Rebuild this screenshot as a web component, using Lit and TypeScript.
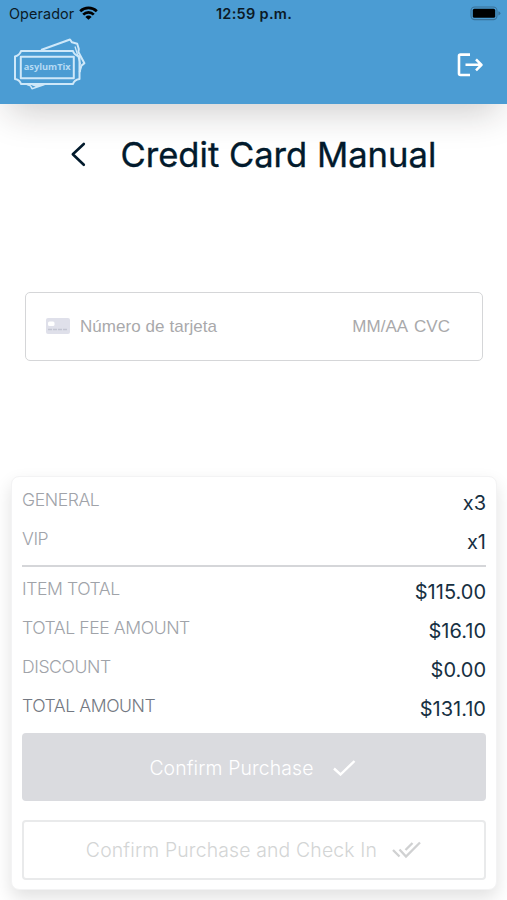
import { LitElement, html, css } from "lit";
import { customElement, property } from "lit/decorators.js";

@customElement("status-bar")
class StatusBar extends LitElement {
  static styles = css`
    :host {
      display: grid;
      grid-template-columns: 1fr auto 1fr;
      align-items: center;
      height: 28px;
      padding: 0 6px 0 9px;
      font: 400 14.4px/28px Inter, sans-serif;
      color: #0b1a26;
    }
    .carrier { display: flex; align-items: center; gap: 5px; letter-spacing: 0.1px; }
    .carrier svg { margin-bottom: 2px; }
    .time { font-weight: 600; font-size: 14.5px; letter-spacing: 0.3px; margin-right: 2px; }
    .battery { justify-self: end; margin-bottom: 2px; }
    svg { display: block; }
  `;
  render() {
    return html`
      <div class="carrier">
        <span>Operador</span>
        <svg width="19" height="14" viewBox="0 0 19 14" fill="none" stroke="#000" stroke-width="2.7">
          <path d="M1.2 5.2a11.9 11.9 0 0 1 16.6 0" />
          <path d="M4.2 8.6a7.6 7.6 0 0 1 10.6 0" />
          <path d="M9.5 13.8 6.4 10.9a4.5 4.5 0 0 1 6.2 0z" fill="#000" stroke="none" />
        </svg>
      </div>
      <div class="time">12:59 p.m.</div>
      <svg class="battery" width="31" height="15" viewBox="0 0 31 15">
        <rect x="1" y="1" width="26" height="12.6" rx="3.8" fill="none" stroke="#3a7198" stroke-width="1.1" />
        <rect x="2.8" y="2.8" width="22.4" height="9" rx="1.6" fill="#000" />
        <path d="M28.4 5.2q2 .5 2 2.1t-2 2.1z" fill="#3a7198" />
      </svg>
    `;
  }
}

@customElement("summary-row")
class SummaryRow extends LitElement {
  @property() label = "";
  @property() value = "";
  @property({ type: Boolean, reflect: true }) strong = false;
  static styles = css`
    :host {
      display: flex;
      justify-content: space-between;
      height: 39px;
      font-family: Inter, sans-serif;
    }
    .label { font-size: 17.6px; line-height: 34px; font-weight: 300; color: #a0a3a9; letter-spacing: -0.42px; }
    .value { font-size: 20px; line-height: 40px; color: #173042; }
    :host([strong]) .label { color: #737882; }
  `;
  render() {
    return html`<span class="label">${this.label}</span><span class="value">${this.value}</span>`;
  }
}

@customElement("app-root")
class AppRoot extends LitElement {
  static styles = css`
    :host {
      display: flex;
      flex-direction: column;
      height: 900px;
      overflow: hidden;
      background: #fff;
      font-family: Inter, sans-serif;
    }
    svg { display: block; flex: none; }
    header {
      height: 103.5px;
      box-sizing: border-box;
      background: #4b9cd3;
      box-shadow: 0 16px 36px -8px rgba(30, 22, 22, 0.22);
    }
    .nav {
      display: flex;
      justify-content: space-between;
      align-items: center;
      height: 73px;
      padding: 0 23px 0 12px;
    }
    .heading {
      display: flex;
      align-items: center;
      gap: 34.5px;
      height: 50px;
      margin-top: 25.5px;
      margin-bottom: 1px;
      padding-left: 68px;
    }
    h1 { margin: 0; font-size: 34.6px; line-height: 50px; font-weight: 400; letter-spacing: 0; color: #021a2c; -webkit-text-stroke: 0.35px #021a2c; }
    .card-field {
      display: flex;
      align-items: center;
      box-sizing: border-box;
      height: 69px;
      margin: 112px 24px 0 25px;
      padding: 0 32px 0 20px;
      border: 1.5px solid #d5d6d8;
      border-radius: 5px;
      font: 400 17px/24px "Liberation Sans", Arial, sans-serif;
      color: #a9a9ab;
    }
    .card-field svg { margin-bottom: 2px; }
    .number { margin-left: 10px; flex: 1; letter-spacing: 0.06px; }
    .expiry { margin-right: 6px; }
    .summary {
      box-sizing: border-box;
      height: 414px;
      margin: 115px 10px 0 11px;
      padding: 6px 10px 0 10px;
      border: 1px solid #f3f3f4;
      border-radius: 8px;
      background: #fff;
      box-shadow: 0 8px 18px rgba(0, 0, 0, 0.12);
    }
    .rule { height: 2px; margin: 4px 0 5px; background: #d5d6d9; }
    .button {
      display: flex;
      align-items: center;
      justify-content: center;
      box-sizing: border-box;
      border-radius: 4px;
      font-size: 19.4px;
      font-weight: 300;
      letter-spacing: 0.13px;
    }
    .primary { height: 68px; margin-top: 5px; padding: 2px 3px 0 0; background: #dadbdf; color: #fff; gap: 19px; }
    .secondary { height: 59.5px; margin-top: 19px; border: 2px solid #e9eaeb; color: #d3d5d5; gap: 15px; padding-right: 1px; letter-spacing: 0.16px; }
  `;

  private items = [
    { label: "GENERAL", value: "x3" },
    { label: "VIP", value: "x1" },
  ];
  private totals = [
    { label: "ITEM TOTAL", value: "$115.00" },
    { label: "TOTAL FEE AMOUNT", value: "$16.10" },
    { label: "DISCOUNT", value: "$0.00" },
    { label: "TOTAL AMOUNT", value: "$131.10", strong: true },
  ];

  render() {
    return html`
      <header>
        <status-bar></status-bar>
        <div class="nav">
          <svg width="75" height="54" viewBox="0 0 75 54" fill="none" stroke="#cfe8f9" stroke-width="2" stroke-linejoin="round">
            <path d="M29 12 58 1.500l2 2.800 5.200 1.500 1.600 5.200-.4 3 6 11.200-3 2.400-1.200 4-.4 2.500" />
            <path d="M63 8.500l5.500 18" stroke-width="1.300" />
            <path d="M15 46.500l3.500 1.400 1.500 2.800 12.500-4.200M20 46.500l4 1.500 5-1.500" stroke-width="1.500" />
            <path d="M9 13h52q1 4 6.500 5.500v22.500q-5.500 1-6.500 5H9q-1-4-6-5V18.500q5-1.500 6-5.500z" />
            <rect x="8.800" y="18.700" width="53" height="21.500" />
            <text x="11.700" y="31.700" font-family="Open Sans, sans-serif" font-size="9.300" font-weight="700" textLength="47" lengthAdjust="spacingAndGlyphs" fill="#b5daf3" stroke="none">asylumTix</text>
          </svg>
          <svg width="28" height="26" viewBox="0 0 28 26" fill="none" stroke="#fff" stroke-width="2.600" stroke-linejoin="round">
            <path d="M14 2.600H4.500q-1.500 0-1.500 1.500v17.400q0 1.500 1.500 1.500H14" />
            <path d="M9.500 12.800h16M20 7.300 25.500 12.800 20 18.300" />
          </svg>
        </div>
      </header>
      <div class="heading">
        <svg width="18" height="26" viewBox="0 0 18 26" fill="none" stroke="#021a2c" stroke-width="2.600" stroke-linecap="round" stroke-linejoin="round">
          <path d="M15.800 3 4.800 13.200 15.800 23.800" />
        </svg>
        <h1>Credit Card Manual</h1>
      </div>
      <div class="card-field">
        <svg width="24" height="16" viewBox="0 0 24 16">
          <rect width="24" height="16" rx="2" fill="#dfe0ea" />
          <rect x="2" y="3.500" width="6.500" height="4.500" rx="1.500" fill="#fff" />
          <path d="M2 11.500h19" stroke="#c3c5d2" stroke-width="1.500" stroke-dasharray="4 1" />
        </svg>
        <span class="number">Número de tarjeta</span>
        <span class="expiry">MM/AA</span>
        <span>CVC</span>
      </div>
      <section class="summary">
        ${this.items.map((r) => html`<summary-row .label=${r.label} .value=${r.value}></summary-row>`)}
        <div class="rule"></div>
        ${this.totals.map(
          (r) => html`<summary-row .label=${r.label} .value=${r.value} .strong=${!!r.strong}></summary-row>`
        )}
        <div class="button primary">
          <span>Confirm Purchase</span>
          <svg width="23" height="16" viewBox="0 0 23 16" fill="none" stroke="#fff" stroke-width="2.400">
            <path d="M1 8.500 7.500 14.500 21.500 1" />
          </svg>
        </div>
        <div class="button secondary">
          <span>Confirm Purchase and Check In</span>
          <svg width="29" height="18" viewBox="0 0 29 18" fill="none" stroke="#d0d1d2" stroke-width="2.300">
            <path d="M1 9 7.500 15.500M7.500 8.500 14 15.500 28 1.500M13.500 9 20.500 2" />
          </svg>
        </div>
      </section>
    `;
  }
}
